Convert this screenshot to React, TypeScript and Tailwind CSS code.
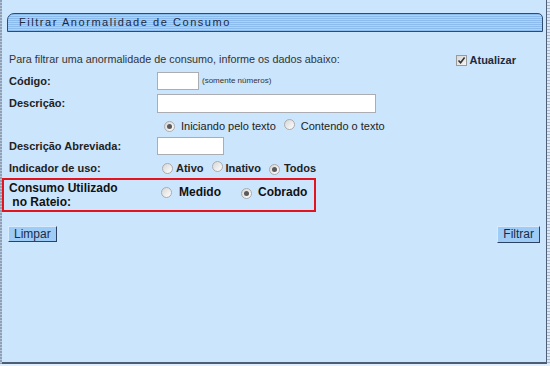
import React from "react";

function Radio({ checked = false }: { checked?: boolean }) {
  return (
    <span className="inline-flex items-center justify-center w-[11px] h-[11px] rounded-full border border-[#ababab] bg-[linear-gradient(135deg,#d6d6d6,#ffffff)] shrink-0">
      {checked && <span className="w-[5px] h-[5px] rounded-full bg-[#5a5a5a]" />}
    </span>
  );
}

function Checkbox() {
  return (
    <span className="inline-flex items-center justify-center w-[11px] h-[11px] border border-[#9a9a9a] bg-[linear-gradient(135deg,#d8d8d8,#f4f4f4)] shrink-0">
      <svg width="9" height="9" viewBox="0 0 9 9">
        <path d="M1.5 4.5 L3.6 6.8 L7.6 1.6" stroke="#333" strokeWidth="1.6" fill="none" />
      </svg>
    </span>
  );
}

export default function App() {
  return (
    <div
      className="w-[550px] h-[366px] bg-[#cbe5fd] overflow-hidden flex flex-col text-[#222]"
      style={{ fontFamily: '"Liberation Sans", Arial, sans-serif' }}
    >
      <div className="flex h-[364px]">
        <div className="w-[2px] bg-[repeating-linear-gradient(to_bottom,#8e9fb6_0px,#8e9fb6_2px,#b7c6d8_2px,#b7c6d8_3px)]" />
        <div className="w-[545px] border-r border-b-2 border-[#4d5d73] flex flex-col">
          {/* header */}
          <div className="mt-[13px] ml-[5px] mr-[3px] h-[19px] rounded-tl-[7px] rounded-tr-[5px] border border-[#2e4c73] bg-[repeating-linear-gradient(to_bottom,#8cbbee_0px,#8cbbee_1px,#aed2f7_1px,#aed2f7_2px)] flex items-center pl-[11px]">
            <span className="text-[11px] tracking-[1.55px] text-[#1e2a3a]">Filtrar Anormalidade de Consumo</span>
          </div>

          <div className="pl-[7px] pr-[30px] flex flex-col">
            {/* instruction */}
            <div className="mt-[21px] h-[12px] flex items-center justify-between">
              <span className="text-[10.8px] text-[#333]">Para filtrar uma anormalidade de consumo, informe os dados abaixo:</span>
              <div className="flex items-center gap-[3px] mt-[2px]">
                <Checkbox />
                <span className="text-[11px] font-bold text-[#1e2a3a]">Atualizar</span>
              </div>
            </div>

            {/* codigo */}
            <div className="mt-[7px] flex items-center h-[18px]">
              <span className="w-[148px] text-[11px] font-bold text-[#222]">Código:</span>
              <div className="w-[42px] h-[18px] bg-white border border-[#abadb3]" />
              <span className="ml-[3px] text-[8px] text-[#333]">(somente números)</span>
            </div>

            {/* descricao */}
            <div className="mt-[4px] flex items-center h-[19px]">
              <span className="w-[148px] text-[11px] font-bold text-[#222]">Descrição:</span>
              <div className="w-[219px] h-[19px] bg-white border border-[#abadb3]" />
            </div>

            <div className="mt-[7px] flex items-center h-[13px] pl-[155px] text-[11px] text-[#222]">
              <Radio checked />
              <span className="ml-[6px]">Iniciando pelo texto</span>
              <span className="ml-[8px]"><Radio /></span>
              <span className="ml-[6px]">Contendo o texto</span>
            </div>

            {/* abreviada */}
            <div className="mt-[4px] flex items-center h-[18px]">
              <span className="w-[148px] text-[11px] font-bold text-[#222]">Descrição Abreviada:</span>
              <div className="w-[67px] h-[18px] bg-white border border-[#abadb3]" />
            </div>

            {/* indicador */}
            <div className="mt-[7px] flex items-center h-[13px] text-[11px] font-bold text-[#222]">
              <span className="w-[153px]">Indicador de uso:</span>
              <Radio />
              <span className="ml-[3px]">Ativo</span>
              <span className="ml-[8px]"><Radio /></span>
              <span className="ml-[3px]">Inativo</span>
              <span className="ml-[8px]"><Radio checked /></span>
              <span className="ml-[4px]">Todos</span>
            </div>
          </div>

          {/* red box */}
          <div className="mt-[3px] w-[314px] h-[34px] border-2 border-[#e3141d] flex items-center text-[12px] font-bold text-[#111] leading-[14px]">
            <div className="w-[157px] pl-[5px] whitespace-pre">{"Consumo Utilizado\n no Rateio:"}</div>
            <div className="flex items-center -mt-[6px]">
              <Radio />
              <span className="ml-[7px]">Medido</span>
              <span className="ml-[20px]"><Radio checked /></span>
              <span className="ml-[6px]">Cobrado</span>
            </div>
          </div>

          {/* buttons */}
          <div className="mt-[14px] pl-[6px] pr-[6px] flex justify-between">
            <button className="h-[16px] px-[5px] bg-[#9fcbf7] border border-t-[#d8ebfd] border-l-[#d8ebfd] border-r-[#2b4262] border-b-[#2b4262] text-[12px] leading-[14px] text-[#1b2b44]">Limpar</button>
            <button className="h-[17px] px-[5px] bg-[#9fcbf7] border border-t-[#d8ebfd] border-l-[#d8ebfd] border-r-[#2b4262] border-b-[#2b4262] text-[12px] leading-[15px] text-[#1b2b44]">Filtrar</button>
          </div>
        </div>
        <div className="w-[3px] bg-[repeating-linear-gradient(to_bottom,#dbe9f6_0px,#dbe9f6_2px,#a9b9cc_2px,#a9b9cc_3px)]" />
      </div>
      <div className="h-[2px] bg-[#e1effc]" />
    </div>
  );
}
